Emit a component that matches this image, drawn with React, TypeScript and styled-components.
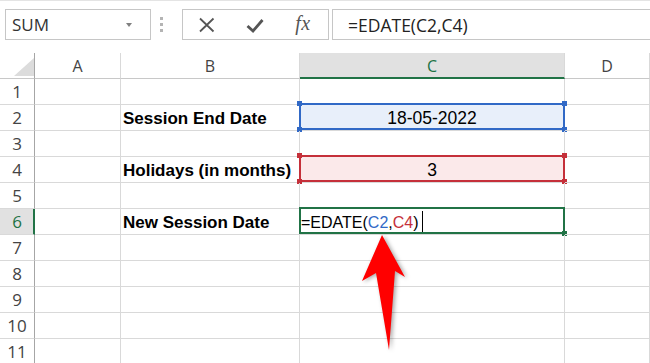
import React from "react";
import styled, { createGlobalStyle, css } from "styled-components";

const GREEN = "#217346";
const BLUE = "#3169c6";
const RED = "#c5303a";
const GRID = "#d9d9d9";

const Global = createGlobalStyle`
  html, body { margin: 0; padding: 0; background: #fff; overflow: hidden; }
  * { box-sizing: border-box; }
`;

const Page = styled.div`
  position: relative;
  width: 650px;
  height: 363px;
  overflow: hidden;
  background: #fff;
`;

const Toolbar = styled.div`
  display: flex;
  align-items: flex-start;
  height: 53px;
  padding: 8px 0 0 5px;
  border-top: 1px solid #e4e4e4;
  font-family: "Open Sans", "Noto Sans", sans-serif;
`;

const NameBox = styled.div`
  display: flex;
  align-items: center;
  width: 146px;
  height: 31px;
  padding-left: 6px;
  border: 1px solid #c6c6c6;
  font-size: 17px;
  color: #333;
`;

const DropArrow = styled.span`
  margin-left: auto;
  margin-right: 18px;
  width: 0;
  height: 0;
  border-left: 3.5px solid transparent;
  border-right: 3.5px solid transparent;
  border-top: 4px solid #808080;
`;

const Dots = styled.div`
  display: flex;
  flex-direction: column;
  gap: 3px;
  margin: 8px 0 0 9px;
  & > span {
    width: 3px;
    height: 3px;
    background: #b4b4b4;
  }
`;

const ButtonBox = styled.div`
  display: flex;
  align-items: center;
  width: 147px;
  height: 31px;
  margin-left: 19px;
  border: 1px solid #c6c6c6;
`;

const IconButton = styled.span`
  display: flex;
  align-items: center;
  justify-content: center;
  width: 48px;
  height: 29px;
  color: #555;
`;

const Fx = styled.span`
  font-family: "Liberation Serif", "DejaVu Serif", serif;
  font-style: italic;
  font-size: 20px;
  color: #555;
  letter-spacing: 0.5px;
  margin-top: -2px;
`;

const FormulaInput = styled.div`
  flex: 1;
  display: flex;
  align-items: center;
  height: 31px;
  margin-left: 3px;
  padding-left: 15px;
  border: 1px solid #c6c6c6;
  border-right: none;
  font-size: 17.5px;
  color: #222;
`;

const Sheet = styled.div`
  display: grid;
  grid-template-columns: 35px 86px 179px 265px 1fr;
  grid-template-rows: repeat(12, 26px);
`;

const Corner = styled.div`
  display: flex;
  justify-content: flex-end;
  align-items: flex-end;
  padding: 0 0 2px 0;
  border-right: 1px solid #a6a6a6;
  border-bottom: 1px solid #c8c8c8;
`;

const CornerTriangle = styled.span`
  width: 0;
  height: 0;
  border-left: 20px solid transparent;
  border-bottom: 18px solid #dcdcdc;
`;

const ColHeader = styled.div<{ $active?: boolean }>`
  display: flex;
  align-items: center;
  justify-content: center;
  font-family: "Open Sans", "Noto Sans", sans-serif;
  font-size: 16px;
  color: #444;
  border-right: 1px solid ${GRID};
  border-bottom: 1px solid #c8c8c8;
  ${(p) =>
    p.$active &&
    css`
      background: #e1e1e1;
      color: ${GREEN};
      border-bottom: 2px solid ${GREEN};
      padding-top: 1px;
    `}
`;

const RowHeader = styled.div<{ $active?: boolean }>`
  display: flex;
  align-items: center;
  justify-content: center;
  font-family: "Open Sans", "Noto Sans", sans-serif;
  font-size: 17px;
  line-height: 25px;
  color: #444;
  border-right: 1px solid #a6a6a6;
  border-bottom: 1px solid ${GRID};
  ${(p) =>
    p.$active &&
    css`
      background: #e1e1e1;
      color: ${GREEN};
      border-right: 2px solid ${GREEN};
      padding-left: 1px;
    `}
`;

const Cell = styled.div<{ $bold?: boolean; $center?: boolean; $fill?: string; $size?: number }>`
  position: relative;
  padding: 2px 2px 0 2px;
  line-height: 23px;
  white-space: nowrap;
  font-family: "Liberation Sans", Arial, sans-serif;
  font-size: ${(p) => p.$size ?? 17}px;
  font-weight: ${(p) => (p.$bold ? 700 : 400)};
  color: #000;
  text-align: ${(p) => (p.$center ? "center" : "left")};
  background: ${(p) => p.$fill ?? "transparent"};
  border-right: 1px solid ${GRID};
  border-bottom: 1px solid ${GRID};
`;

const SelBox = styled.span<{ $c: string }>`
  position: absolute;
  top: -2px;
  left: -1px;
  right: -1px;
  bottom: 0;
  border: 2px solid ${(p) => p.$c};
  pointer-events: none;
`;

const Handle = styled.span<{ $c: string; $v: "top" | "bottom"; $h: "left" | "right" }>`
  position: absolute;
  width: 5px;
  height: 5px;
  background: ${(p) => p.$c};
  ${(p) => p.$v}: -4px;
  ${(p) => p.$h}: -4px;
`;

const Ref = styled.span<{ $c: string }>`
  color: ${(p) => p.$c};
`;

const Caret = styled.span`
  display: inline-block;
  width: 1px;
  height: 22px;
  margin-left: 3px;
  background: #000;
  vertical-align: -5px;
`;

const ArrowSvg = styled.svg`
  position: absolute;
  left: 0;
  top: 0;
  pointer-events: none;
  filter: drop-shadow(2px 1px 2px rgba(0, 0, 0, 0.35));
`;

const cols = ["A", "B", "C", "D"];

const Corners = ({ c, all }: { c: string; all: boolean }) => (
  <SelBox $c={c}>
    {all && <Handle $c={c} $v="top" $h="left" />}
    {all && <Handle $c={c} $v="top" $h="right" />}
    {all && <Handle $c={c} $v="bottom" $h="left" />}
    <Handle $c={c} $v="bottom" $h="right" />
  </SelBox>
);

function renderCell(row: number, col: number) {
  const key = `${row}-${col}`;
  if (col === 1) {
    const labels: Record<number, string> = {
      2: "Session End Date",
      4: "Holidays (in months)",
      6: "New Session Date",
    };
    return (
      <Cell key={key} $bold>
        {labels[row] ?? ""}
      </Cell>
    );
  }
  if (col === 2 && row === 2) {
    return (
      <Cell key={key} $center $fill="#e8effa" $size={17.5}>
        18-05-2022
        <Corners c={BLUE} all />
      </Cell>
    );
  }
  if (col === 2 && row === 4) {
    return (
      <Cell key={key} $center $fill="#fbe9ea" $size={17.5}>
        3
        <Corners c={RED} all />
      </Cell>
    );
  }
  if (col === 2 && row === 6) {
    return (
      <Cell key={key} $size={16} style={{ paddingLeft: 1 }}>
        =EDATE(<Ref $c={BLUE}>C2</Ref>,<Ref $c={RED}>C4</Ref>)
        <Caret />
        <Corners c={GREEN} all={false} />
      </Cell>
    );
  }
  return <Cell key={key} />;
}

export default function App() {
  const rows = Array.from({ length: 11 }, (_, i) => i + 1);
  return (
    <Page>
      <Global />
      <Toolbar>
        <NameBox>
          SUM
          <DropArrow />
        </NameBox>
        <Dots>
          <span />
          <span />
          <span />
        </Dots>
        <ButtonBox>
          <IconButton>
            <svg width="18" height="18" viewBox="0 0 18 18">
              <path d="M2 2.5 L15.5 15.5 M15.5 2.5 L2 15.5" stroke="#555" strokeWidth="1.8" fill="none" />
            </svg>
          </IconButton>
          <IconButton>
            <svg width="18" height="18" viewBox="0 0 18 18">
              <path d="M1.5 10 L7 15 L16.5 4" stroke="#555" strokeWidth="2.8" fill="none" strokeLinejoin="miter" />
            </svg>
          </IconButton>
          <IconButton>
            <Fx>fx</Fx>
          </IconButton>
        </ButtonBox>
        <FormulaInput>=EDATE(C2,C4)</FormulaInput>
      </Toolbar>
      <Sheet>
        <Corner>
          <CornerTriangle />
        </Corner>
        {cols.map((c) => (
          <ColHeader key={c} $active={c === "C"}>
            {c}
          </ColHeader>
        ))}
        {rows.map((r) => (
          <React.Fragment key={r}>
            <RowHeader $active={r === 6}>{r}</RowHeader>
            {[0, 1, 2, 3].map((c) => renderCell(r, c))}
          </React.Fragment>
        ))}
      </Sheet>
      <ArrowSvg width="650" height="363" viewBox="0 0 650 363">
        <polygon points="382,235 405,277 395,271 389,350 376,273 362,281" fill="#ff0000" />
      </ArrowSvg>
    </Page>
  );
}
